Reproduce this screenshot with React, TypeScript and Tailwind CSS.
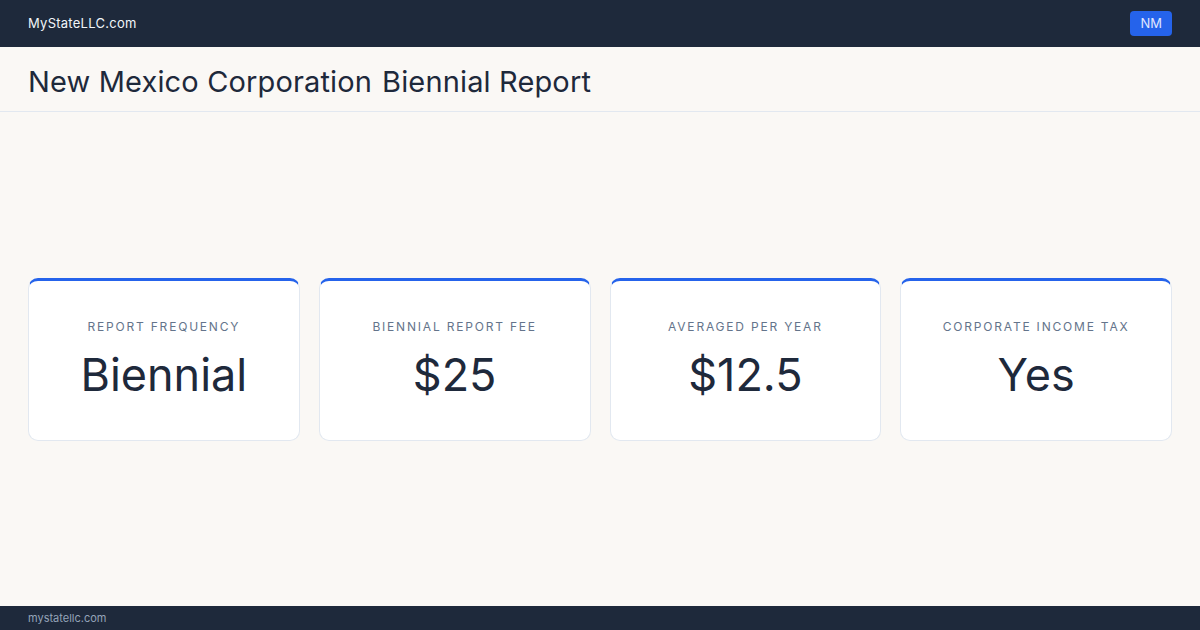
const stats = [
  { label: "Report Frequency", value: "Biennial" },
  { label: "Biennial Report Fee", value: "$25" },
  { label: "Averaged per Year", value: "$12.5" },
  { label: "Corporate Income Tax", value: "Yes" },
];

export default function App() {
  return (
    <div
      className="flex h-[630px] w-[1200px] flex-col bg-[#faf8f5] text-[#1e293b]"
      style={{ fontFamily: "Inter, 'Noto Sans', sans-serif" }}
    >
      {/* top bar */}
      <header className="flex h-[47px] items-center justify-between bg-[#1e293b] px-[28px]">
        <span className="text-[13px] tracking-[0.02em] text-[#f1f5f9]">MyStateLLC.com</span>
        <span className="rounded-[4px] bg-[#2563eb] px-[10px] py-[3px] text-[13px] text-[#e0e7ff]">NM</span>
      </header>

      {/* title */}
      <div className="flex h-[65px] items-center gap-[10px] border-b border-[#e2e8f0] px-[28px] pt-[5px] text-[29px] tracking-[0.005em]">
        <span>New Mexico Corporation</span>
        <span>Biennial Report</span>
      </div>

      {/* stat cards */}
      <main className="flex flex-1 items-center px-[28px]">
        <div className="grid w-full grid-cols-4 gap-[19px]">
          {stats.map((s) => (
            <div
              key={s.label}
              className="flex h-[163px] flex-col items-center justify-center rounded-[10px] border border-t-[3px] border-[#e2e8f0] border-t-[#2563eb] bg-white pb-[6px]"
            >
              <span className="text-[12px] uppercase tracking-[0.15em] text-[#64748b]">{s.label}</span>
              <span className="mt-[16px] text-[45px] leading-none">{s.value}</span>
            </div>
          ))}
        </div>
      </main>

      {/* footer */}
      <footer className="flex h-[24px] items-center bg-[#1e293b] px-[28px]">
        <span className="text-[11px] text-[#94a3b8]">mystatellc.com</span>
      </footer>
    </div>
  );
}
